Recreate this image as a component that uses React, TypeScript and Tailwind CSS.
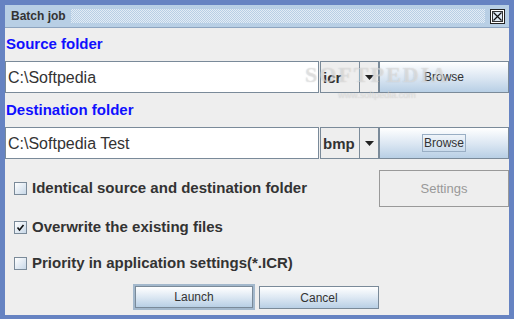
import { useState } from 'react'

// ─── Small Swing-like widgets ────────────────────────────────────────────────
function MetalButton({
  label,
  width,
  focused = false,
  focusRing = false,
  className = '',
}: {
  label: string
  width: string
  focused?: boolean
  focusRing?: boolean
  className?: string
}) {
  return (
    <button
      className={`${width} ${className} flex items-center justify-center border border-[#7a8a99] bg-gradient-to-b from-[#ffffff] via-[#dde8f3] to-[#b8cfe5] text-[12px] text-[#333333] ${
        focused ? 'outline outline-2 outline-[#a3b8cc]' : ''
      }`}
    >
      {focusRing ? (
        <span className="border border-[#99aec4] px-[1px] leading-[16px]">{label}</span>
      ) : (
        label
      )}
    </button>
  )
}

function Combo({ value }: { value: string }) {
  return (
    <div className="flex h-full w-[59px] border border-[#7a8a99] bg-[#eeeeee]">
      <div className="flex flex-1 items-center border-r border-[#7a8a99] pl-[2px] pt-[2px] text-[15px] font-bold text-[#333333]">
        {value}
      </div>
      <div className="flex w-[18px] items-center justify-center">
        <svg width="9" height="5" viewBox="0 0 9 5" aria-hidden>
          <path d="M0 0h9L4.5 5z" fill="#222" />
        </svg>
      </div>
    </div>
  )
}

function PathRow({ path, ext, focusRing }: { path: string; ext: string; focusRing?: boolean }) {
  return (
    <div className="flex h-[32px] items-stretch">
      <div className="flex w-[314px] items-center border border-[#7a8a99] bg-white pl-[2px] pt-[1px] text-[16px] text-[#333333]">
        {path}
      </div>
      <div className="w-[1px]" />
      <Combo value={ext} />
      <MetalButton label="Browse" width="w-[130px]" focusRing={focusRing} />
    </div>
  )
}

function Check({ label, checked: initial }: { label: string; checked?: boolean }) {
  const [checked, setChecked] = useState(!!initial)
  return (
    <label className="flex items-center gap-[5px] pl-[9px] text-[15px] font-bold text-[#333333]">
      <span
        onClick={() => setChecked((c) => !c)}
        className="flex h-[13px] w-[13px] items-center justify-center border border-[#7a8a99] bg-gradient-to-br from-[#ffffff] to-[#c8d8e8]"
      >
        {checked && (
          <svg width="9" height="9" viewBox="0 0 9 9" aria-hidden>
            <path d="M1.5 4.5l2 2.5L7.5 2" stroke="#111" strokeWidth="1.6" fill="none" />
          </svg>
        )}
      </span>
      {label}
    </label>
  )
}

// ─── Dialog ──────────────────────────────────────────────────────────────────
export default function App() {
  return (
    <div
      className="relative flex h-[319px] w-[514px] flex-col bg-[#6683c2] pb-[4px] pl-[5px] pr-[5px] pt-[5px]"
      style={{ fontFamily: '"Liberation Sans", Arial, sans-serif' }}
    >
      {/* title bar */}
      <div className="flex h-[23px] items-center border-b border-[#8da4bf] bg-[#b8cfe5] pl-[6px] pr-[4px]">
        <span className="text-[12px] font-bold text-[#333333]">Batch job</span>
        <div className="mx-[5px] h-[14px] flex-1 bg-[repeating-conic-gradient(#ffffff_0_25%,transparent_0_50%)] bg-[length:2px_2px] opacity-60" />
        <div className="flex h-[15px] w-[15px] items-center justify-center border border-[#222] bg-white p-[1px]">
          <div className="flex h-full w-full items-center justify-center border border-[#333] bg-[#dde8f3]">
            <svg width="9" height="9" viewBox="0 0 9 9" aria-hidden>
              <path d="M0.5 0.5l8 8M8.5 0.5l-8 8" stroke="#111" strokeWidth="1.2" />
            </svg>
          </div>
        </div>
      </div>

      {/* content */}
      <div className="flex flex-1 flex-col bg-[#eeeeee]">
        <div className="flex h-[33px] items-center pl-[1px] text-[15px] font-bold text-[#1010ff]">Source folder</div>
        <PathRow path="C:\Softpedia" ext="icr" />
        <div className="flex h-[34px] items-center pl-[1px] text-[15px] font-bold text-[#1010ff]">
          Destination folder
        </div>
        <PathRow path="C:\Softpedia Test" ext="bmp" focusRing />

        <div className="mt-[11px] flex h-[37px] items-center justify-between">
          <Check label="Identical source and destination folder" />
          <button className="h-full w-[130px] border border-[#999999] text-[13px] text-[#999999]">Settings</button>
        </div>
        <div className="flex h-[40px] items-center">
          <Check label="Overwrite the existing files" checked />
        </div>
        <div className="flex h-[33px] items-center">
          <Check label="Priority in application settings(*.ICR)" />
        </div>

        <div className="mt-[6px] flex justify-center gap-[6px]">
          <MetalButton label="Launch" width="w-[118px] h-[22px]" focused />
          <MetalButton label="Cancel" width="w-[120px] h-[23px]" />
        </div>
      </div>

      {/* watermark */}
      <div className="pointer-events-none absolute left-[305px] top-[58px] flex flex-col items-center text-white/40">
        <span className="text-[22px] font-bold tracking-[2px] [font-family:'Liberation_Serif',serif] [text-shadow:0_0_1px_rgba(150,150,150,0.5)]">
          SOFTPEDIA
        </span>
        <span className="-mt-[2px] text-[9px] [text-shadow:0_0_1px_rgba(150,150,150,0.5)]">www.softpedia.com</span>
      </div>
    </div>
  )
}
